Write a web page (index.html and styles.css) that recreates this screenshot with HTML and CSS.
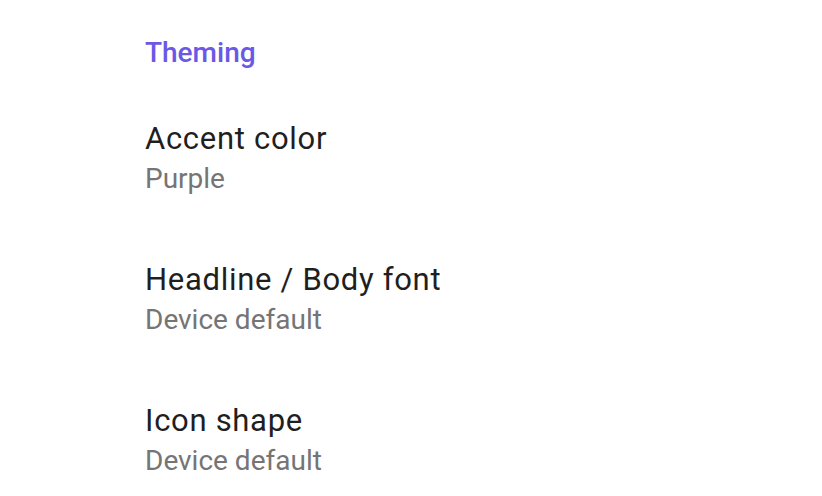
FILE: index.html
```html
<!DOCTYPE html>
<html>
<head>
<meta charset="utf-8">
<link rel="stylesheet" href="styles.css">
</head>
<body>
<div class="screen">
  <div class="section-title">Theming</div>
  <div class="list">
    <div class="item">
      <div class="item-title">Accent color</div>
      <div class="item-sub">Purple</div>
    </div>
    <div class="item">
      <div class="item-title">Headline / Body font</div>
      <div class="item-sub">Device default</div>
    </div>
    <div class="item">
      <div class="item-title">Icon shape</div>
      <div class="item-sub">Device default</div>
    </div>
  </div>
</div>
</body>
</html>
```

FILE: styles.css
```css
html, body {
  margin: 0;
  padding: 0;
  background: #ffffff;
}
.screen {
  width: 822px;
  height: 496px;
  overflow: hidden;
  padding: 33px 0 0 145px;
  box-sizing: border-box;
  font-family: Roboto, "Noto Sans", sans-serif;
}
.section-title {
  font-size: 28px;
  line-height: 40px;
  font-weight: 500;
  color: #6b58e6;
}
.list {
  display: flex;
  flex-direction: column;
  gap: 61px;
  margin-top: 46px;
}
.item-title {
  font-size: 31px;
  line-height: 40px;
  letter-spacing: 0.7px;
  color: #1f1f1f;
}
.item-sub {
  font-size: 28px;
  line-height: 40px;
  color: #757575;
}
```
